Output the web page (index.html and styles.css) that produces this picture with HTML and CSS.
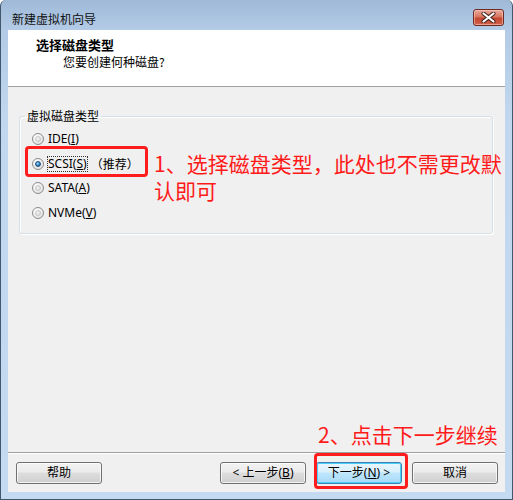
FILE: index.html
```html
<!DOCTYPE html>
<html lang="zh-CN">
<head>
<meta charset="utf-8">
<title>新建虚拟机向导</title>
<link rel="stylesheet" href="styles.css">
</head>
<body>
<div class="window">
  <div class="titlebar">
    <span class="title">新建虚拟机向导</span>
    <button class="close" aria-label="关闭">
      <svg width="15" height="11" viewBox="0 0 15 11">
        <path d="M2.5 1.5 L12.5 9.5 M12.5 1.5 L2.5 9.5" stroke="#3a1d1a" stroke-width="4" stroke-linecap="round"/>
        <path d="M2.5 1.5 L12.5 9.5 M12.5 1.5 L2.5 9.5" stroke="#ffffff" stroke-width="2.2" stroke-linecap="round"/>
      </svg>
    </button>
  </div>
  <div class="client">
    <div class="header">
      <div class="h-title">选择磁盘类型</div>
      <div class="h-sub">您要创建何种磁盘?</div>
    </div>
    <div class="body">
      <fieldset class="group">
        <legend>虚拟磁盘类型</legend>
        <div class="radio"><span class="rb"></span><span>IDE(<u>I</u>)</span></div>
        <div class="radio"><span class="rb on"></span><span class="focus">SCSI(<u>S</u>)</span><span class="rec">（推荐）</span></div>
        <div class="radio"><span class="rb"></span><span>SATA(<u>A</u>)</span></div>
        <div class="radio"><span class="rb"></span><span>NVMe(<u>V</u>)</span></div>
      </fieldset>
    </div>
    <div class="footer">
      <button class="btn">帮助</button>
      <div class="nav">
        <button class="btn">&lt; 上一步(<u>B</u>)</button>
        <button class="btn default">下一步(<u>N</u>) &gt;</button>
        <button class="btn">取消</button>
      </div>
    </div>
  </div>
  <div class="mark mark-1"></div>
  <div class="mark mark-2"></div>
  <div class="note note-1">1、选择磁盘类型，此处也不需更改默认即可</div>
  <div class="note note-2">2、点击下一步继续</div>
</div>
</body>
</html>
```

FILE: styles.css
```css
* { box-sizing: border-box; }
html, body { margin: 0; padding: 0; background: #ffffff; }
body {
  font-family: "Noto Sans", "Noto Sans CJK SC", sans-serif;
  font-size: 12px;
  color: #000;
}
.window {
  position: relative;
  width: 513px;
  height: 500px;
  display: flex;
  flex-direction: column;
  background: linear-gradient(180deg, #9fb9d7 0px, #b3cbe6 30px, #c1d7ef 120px, #c4daf1 500px);
  border-left: 1px solid #42566e;
  border-right: 1px solid #42566e;
  border-bottom: 1px solid #42566e;
  border-top-left-radius: 6px;
  border-top-right-radius: 6px;
  padding: 0 7px 7px 7px;
}
.titlebar {
  height: 30px;
  flex: none;
  display: flex;
  align-items: flex-start;
  justify-content: space-between;
}
.title {
  font-family: "Noto Sans CJK SC", sans-serif;
  font-size: 12px;
  line-height: 14px;
  margin-top: 12px;
  margin-left: 4px;
  color: #111;
}
.close {
  width: 31px;
  height: 17px;
  margin-top: 9px;
  margin-right: 1px;
  padding: 0;
  border: 1px solid #6e2a22;
  border-radius: 3px;
  background: linear-gradient(180deg, #e9a99c 0%, #d8765f 45%, #c44632 55%, #d2614a 100%);
  box-shadow: inset 0 0 0 1px rgba(255, 210, 200, 0.55);
  display: flex;
  align-items: center;
  justify-content: center;
}
.client {
  flex: 1;
  display: flex;
  flex-direction: column;
  background: #f0f0f0;
}
.header {
  height: 57px;
  flex: none;
  background: #ffffff;
  border-bottom: 1px solid #a0a0a0;
  padding-top: 7px;
}
.h-title {
  font-family: "Noto Sans CJK SC", sans-serif;
  font-weight: bold;
  font-size: 13px;
  line-height: 16px;
  margin-left: 28px;
}
.h-sub {
  font-family: "Noto Sans CJK SC", sans-serif;
  font-size: 12px;
  line-height: 16px;
  margin-top: 1px;
  margin-left: 55px;
}
.body {
  flex: 1;
  padding: 22px 12px 0 11px;
}
.group {
  margin: 0;
  border: 1px solid #d5dfe5;
  border-radius: 3px;
  padding: 4px 12px 8px 12px;
  box-shadow: inset 1px 1px 0 #ffffff, 1px 1px 0 #ffffff;
}
.group legend {
  font-family: "Noto Sans CJK SC", sans-serif;
  font-size: 12px;
  line-height: 14px;
  padding: 0 2px;
  margin-left: -7px;
}
.radio {
  height: 24.5px;
  display: flex;
  align-items: center;
  line-height: 14px;
}
.rb {
  width: 12px;
  height: 12px;
  border-radius: 50%;
  border: 1px solid #8b8b8b;
  background: radial-gradient(circle at 35% 30%, #ffffff 0%, #f4f4f4 35%, #d9d9d9 100%);
  margin-right: 4px;
  flex: none;
  position: relative;
}
.rb::after {
  content: "";
  position: absolute;
  left: 2px; top: 2px;
  width: 6px; height: 6px;
  border-radius: 50%;
  background: radial-gradient(circle at 40% 35%, #f0f0f0 0%, #dcdcdc 100%);
  border: 1px solid #c6c6c6;
  box-sizing: border-box;
}
.rb.on::after {
  background: radial-gradient(circle at 40% 35%, #a9dcfa 0%, #2b86c4 55%, #144a7f 100%);
  border: 1px solid #1b4f80;
}
.focus { outline: 1px dotted #333; outline-offset: 0px; }
.rec {
  font-family: "Noto Sans CJK SC", sans-serif;
  margin-left: 4px;
}
u { text-decoration: underline; text-underline-offset: 1px; }
.footer {
  flex: none;
  border-top: 1px solid #a0a0a0;
  box-shadow: inset 0 1px 0 #ffffff;
  padding: 9px 7px 8px 8px;
  display: flex;
  justify-content: space-between;
}
.nav { display: flex; gap: 10px; }
.btn {
  width: 86px;
  height: 22px;
  padding: 0;
  border: 1px solid #707070;
  border-radius: 3px;
  background: linear-gradient(180deg, #f2f2f2 0%, #ebebeb 45%, #dddddd 50%, #cfcfcf 100%);
  box-shadow: inset 0 0 0 1px rgba(255, 255, 255, 0.75);
  font-family: "Noto Sans", "Noto Sans CJK SC", sans-serif;
  font-size: 12px;
  line-height: 14px;
  color: #000;
}
.btn.default {
  border-color: #3c7fb1;
  background: linear-gradient(180deg, #eaf6fd 0%, #d9f0fc 45%, #bee6fd 50%, #a7d9f5 100%);
  box-shadow: inset 0 0 0 1px #48d0f8;
}
.mark {
  position: absolute;
  border: 3px solid #ff1c1c;
  border-radius: 4px;
}
.mark-1 { left: 24px; top: 146px; width: 123px; height: 31px; }
.mark-2 { left: 313px; top: 453px; width: 94px; height: 36px; }
.note {
  position: absolute;
  font-family: "Noto Sans CJK SC", sans-serif;
  font-size: 21px;
  line-height: 27px;
  color: #ff1a1a;
}
.note-1 { left: 153px; top: 150px; width: 356px; }
.note-2 { left: 317px; top: 421px; white-space: nowrap; }
```
